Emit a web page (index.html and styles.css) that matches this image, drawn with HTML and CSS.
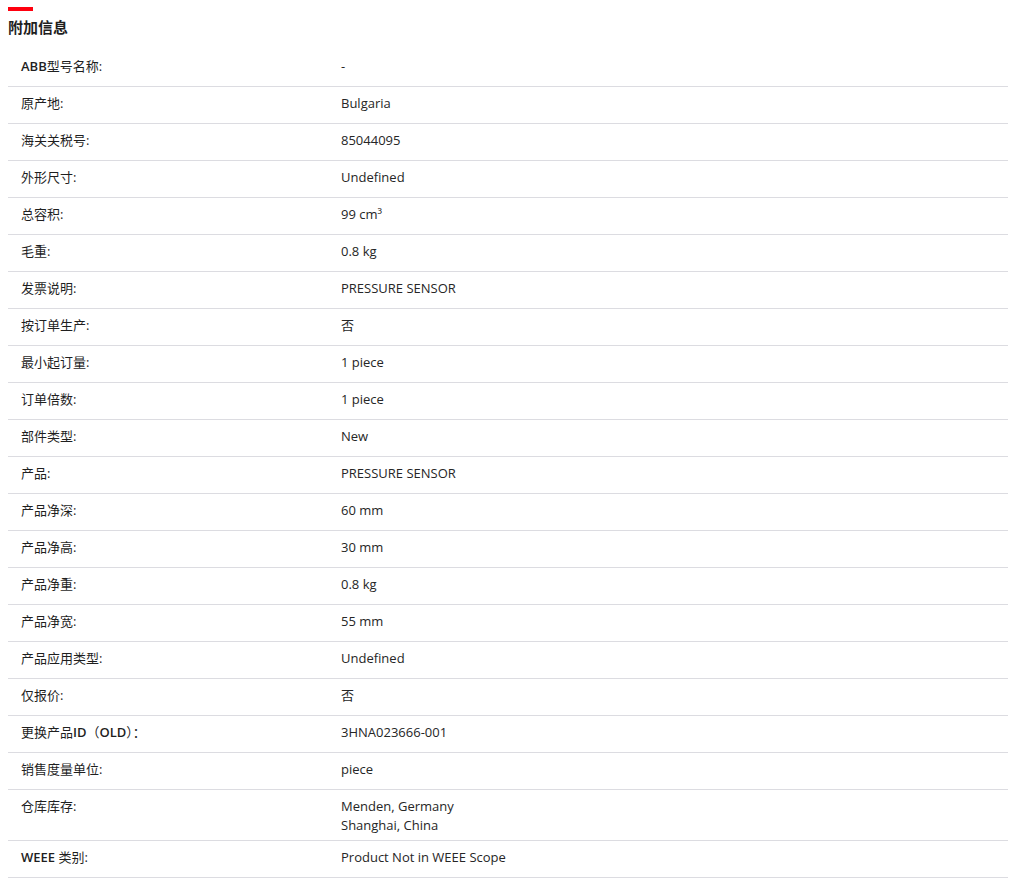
FILE: index.html
```html
<!DOCTYPE html>
<html lang="zh">
<head>
<meta charset="utf-8">
<title>附加信息</title>
<link rel="stylesheet" href="styles.css">
</head>
<body>
<section class="info">
  <div class="accent"></div>
  <h2 class="title">附加信息</h2>
  <div class="table">
    <div class="row"><div class="label"><span class="latin">ABB</span>型号名称:</div><div class="value">-</div></div>
    <div class="row"><div class="label">原产地:</div><div class="value">Bulgaria</div></div>
    <div class="row"><div class="label">海关关税号:</div><div class="value">85044095</div></div>
    <div class="row"><div class="label">外形尺寸:</div><div class="value">Undefined</div></div>
    <div class="row"><div class="label">总容积:</div><div class="value">99 cm³</div></div>
    <div class="row"><div class="label">毛重:</div><div class="value">0.8 kg</div></div>
    <div class="row"><div class="label">发票说明:</div><div class="value">PRESSURE SENSOR</div></div>
    <div class="row"><div class="label">按订单生产:</div><div class="value">否</div></div>
    <div class="row"><div class="label">最小起订量:</div><div class="value">1 piece</div></div>
    <div class="row"><div class="label">订单倍数:</div><div class="value">1 piece</div></div>
    <div class="row"><div class="label">部件类型:</div><div class="value">New</div></div>
    <div class="row"><div class="label">产品:</div><div class="value">PRESSURE SENSOR</div></div>
    <div class="row"><div class="label">产品净深:</div><div class="value">60 mm</div></div>
    <div class="row"><div class="label">产品净高:</div><div class="value">30 mm</div></div>
    <div class="row"><div class="label">产品净重:</div><div class="value">0.8 kg</div></div>
    <div class="row"><div class="label">产品净宽:</div><div class="value">55 mm</div></div>
    <div class="row"><div class="label">产品应用类型:</div><div class="value">Undefined</div></div>
    <div class="row"><div class="label">仅报价:</div><div class="value">否</div></div>
    <div class="row"><div class="label">更换产品<span class="latin">ID</span>（<span class="latin">OLD</span>）：</div><div class="value">3HNA023666-001</div></div>
    <div class="row"><div class="label">销售度量单位:</div><div class="value">piece</div></div>
    <div class="row"><div class="label">仓库库存:</div><div class="value"><div>Menden, Germany</div><div>Shanghai, China</div></div></div>
    <div class="row"><div class="label"><span class="latin">WEEE</span> 类别:</div><div class="value">Product Not in WEEE Scope</div></div>
  </div>
</section>
</body>
</html>
```

FILE: styles.css
```css
html, body {
  margin: 0;
  padding: 0;
  background: #ffffff;
}

body {
  font-family: "Open Sans", "Noto Sans CJK SC", sans-serif;
  color: #1f1f1f;
  font-size: 13px;
}

.info {
  padding: 7px 3px 0 8px;
}

.accent {
  width: 25px;
  height: 4px;
  background: #ff000f;
}

.title {
  margin: 0;
  padding-top: 6px;
  font-size: 15px;
  line-height: 20px;
  font-weight: 700;
  color: #1f1f1f;
  font-family: "Noto Sans CJK SC", sans-serif;
}

.table {
  margin-top: 13px;
}

.row {
  display: grid;
  grid-template-columns: 320px 1fr;
  box-sizing: border-box;
  min-height: 37px;
  padding: 7px 13px 5px;
  border-bottom: 1px solid #dcdce1;
  line-height: 19px;
  align-items: start;
}

.label {
  font-weight: 400;
  color: #1f1f1f;
}

.latin {
  font-weight: 600;
}

.value {
  color: #262626;
}
```
